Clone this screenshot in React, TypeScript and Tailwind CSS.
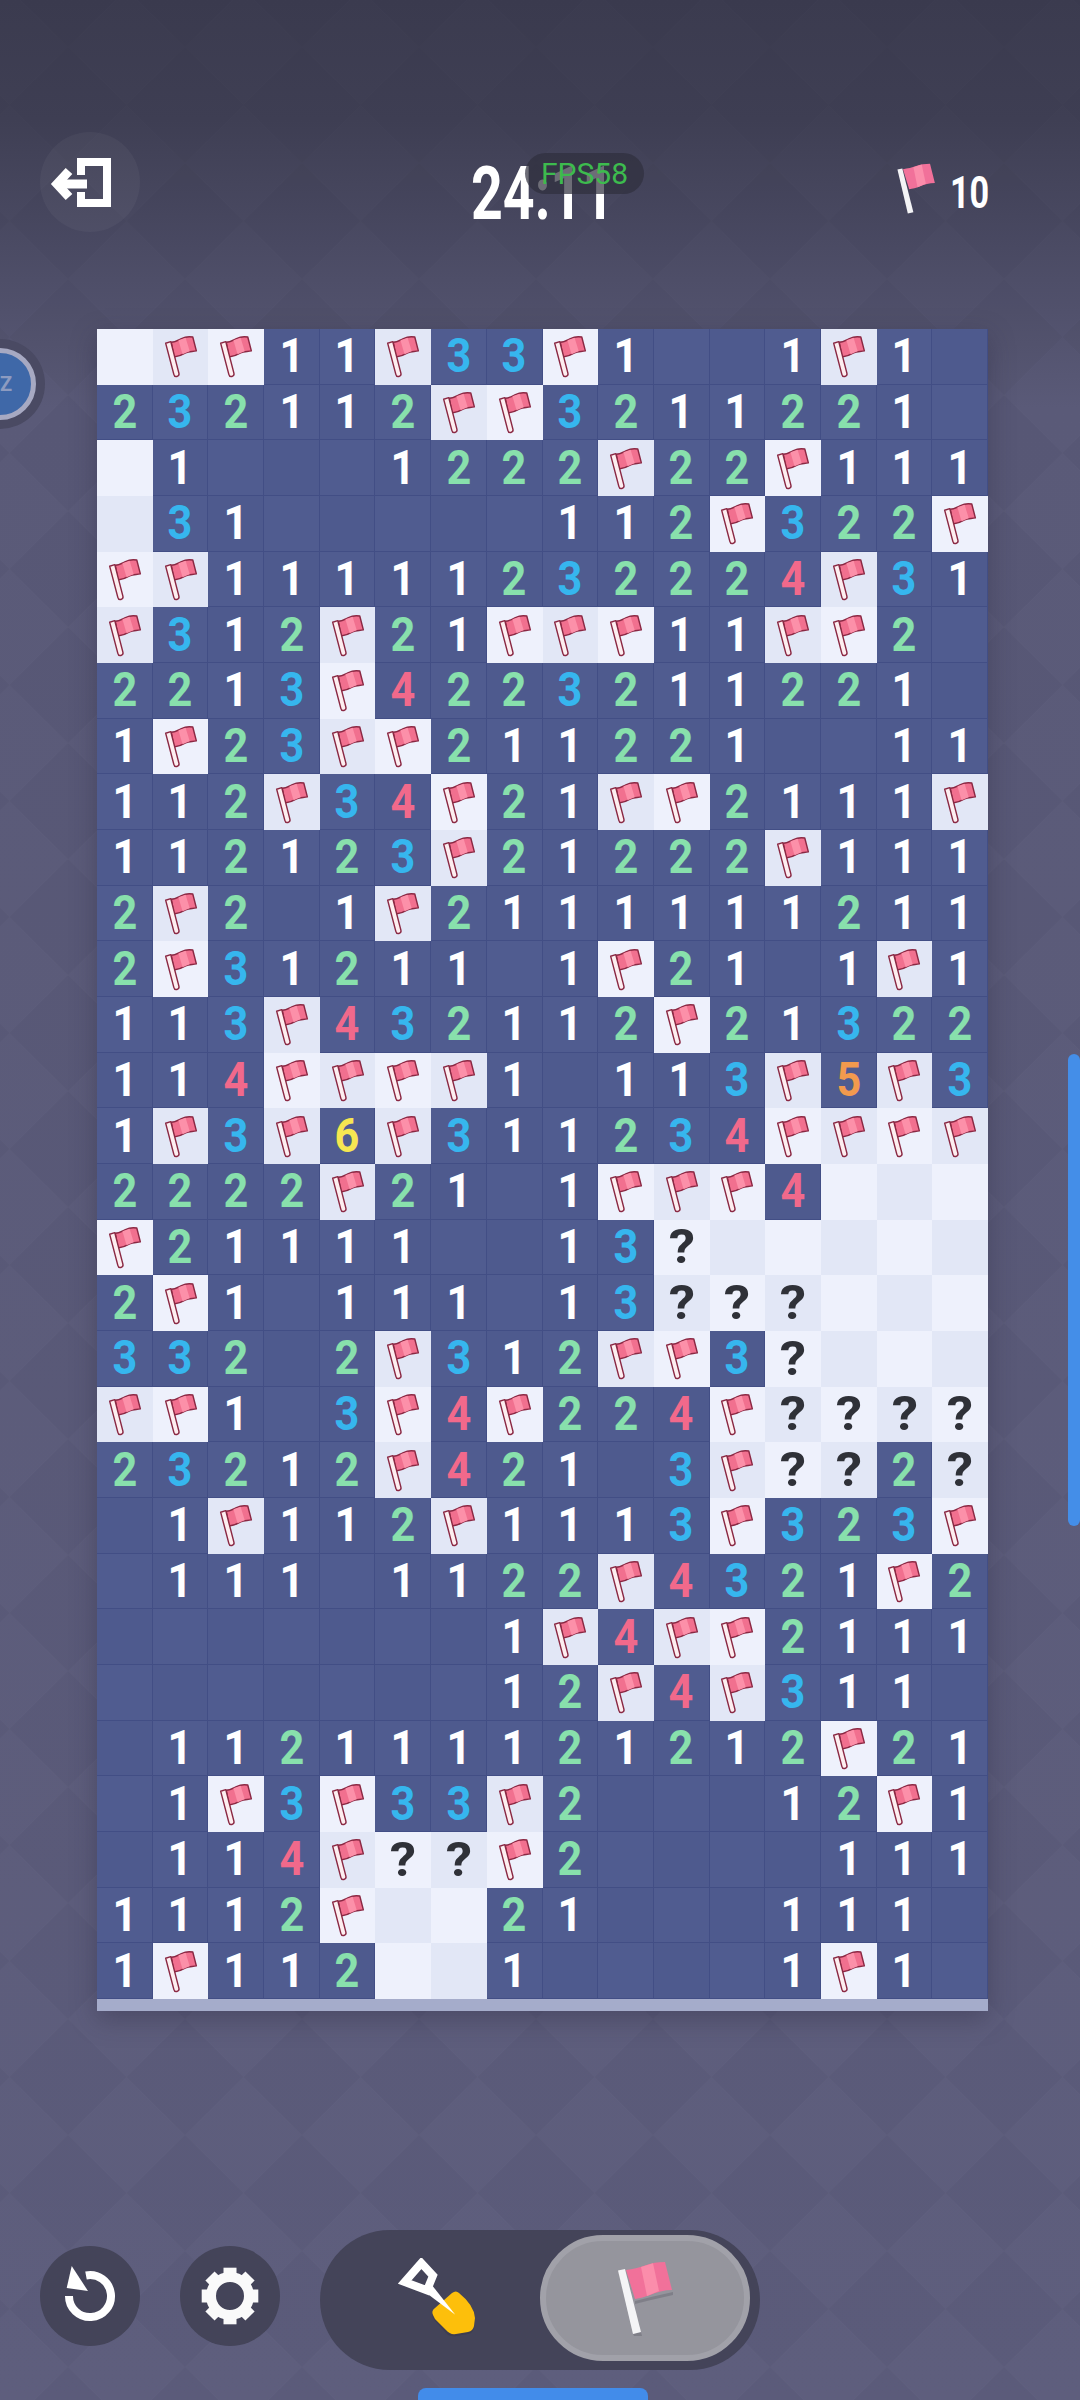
import React from 'react';

// F flag, ? question mark, L uncovered light tile, . empty dark tile
const BOARD = [
  'LFF11F33F1..1F1.',
  '232112FF3211221.',
  'L1...1222F22F111',
  'L31.....112F322F',
  'FF11111232224F31',
  'F312F21FFF11FF2.',
  '2213F4223211221.',
  '1F23FF211221..11',
  '112F34F21FF2111F',
  '11212 3F212 22F111'.replace(/ /g, ''),
  '2F2.1F2111111211',
  '2F31211.1F21.1F1',
  '113F432112F21322',
  '114FFFF1.113F5F3',
  '1F3F6F311234FFFF',
  '2222F21.1FFF4LLL',
  'F21111..13?LLLLL',
  '2F1.111.13???LLL',
  '332.2F3 12FF3?LLL'.replace(' ', ''),
  'FF1.3F4F224F????',
  '23212F421.3F??2?',
  '.1F112F1113F323F',
  '.111.1122F4321F2',
  '.......1F4FF2111',
  '.......12F4F311.',
  '.112111121212F21',
  '.1F3F33F2...12F1',
  '.114F??F2....111',
  '1112FLL21...111.',
  '1F112LL1....1F1.',
];

const DIGIT_COLORS: Record<string, string> = {
  '1': 'text-white',
  '2': 'text-[#88e0ac]',
  '3': 'text-[#36b6ee]',
  '4': 'text-[#f1698b]',
  '5': 'text-[#f29a4e]',
  '6': 'text-[#f6e651]',
};

function TileFlag() {
  return (
    <svg width="34" height="43" viewBox="0 0 33 42">
      <path d="M7 7 C11 7 14 5 17 3.500 C21 1.500 25 1.500 28 2 L31.500 15.500 C28 16.500 24.500 15.500 21 17.500 C17 20 13.500 21 9.500 21.500 Z" fill="#f1708f" stroke="#8a2843" strokeWidth="1.400" strokeLinejoin="round" />
      <path d="M14 5.200 L21 2.600 L25 15.800 L18 18.800 Z" fill="#fc90a9" />
      <path d="M1.500 8 L6.500 6.500 L14.500 37.500 Q15 40 12.500 40.500 Q10 41 9.500 38.500 Z" fill="#fdeef0" stroke="#8a2843" strokeWidth="1.400" strokeLinejoin="round" />
    </svg>
  );
}

function PlainFlag({ className, shadow }: { className: string; shadow?: boolean }) {
  return (
    <svg className={className} viewBox="0 0 55 75">
      {shadow && (
        <>
          <path d="M17 40 L33 36 L55 31 L55 34 L33 39 L17 43 Z" fill="#7f7f88" />
          <path d="M15 73 L23 71 L24 75 L16 75 Z" fill="#7f7f88" />
        </>
      )}
      <path d="M8 9 C15 8 21 7 27 4.500 C33 2 40 1 47 1 L54 29 C46 29 39 31 32 34 C27 36 22 37 17 38 Z" fill="#f1719a" />
      <path d="M23 6 L35 2.300 L41 30 L29 35 Z" fill="#fb8dab" />
      <path d="M0 9.500 L7 8 L23 71 L15 73 Z" fill="#f4f4f6" />
    </svg>
  );
}

function Shovel() {
  return (
    <svg width="80" height="80" viewBox="0 0 80 80">
      <path d="M35 60 Q33 55 37 52 L54 37 Q58 34 61 37 Q76 49 77 62 L76 70 Q75 75 70 76 L58 78 Q52 79 48 75 L37 63 Z" fill="#35354a" opacity="0.5" />
      <path d="M35 57 Q33 53 37 50 L54 35 Q58 32 61 35 Q76 47 77 60 L76 68 Q75 73 70 74 L58 76 Q52 77 48 72 L37 61 Z" fill="#fdbf0b" />
      <path d="M6.700 24 L23.300 5 L35 17.700 L29 32.300 Z" fill="none" stroke="#fff" strokeWidth="8" strokeLinejoin="miter" />
      <path d="M24.700 32.300 L33.300 26.300 L57.300 56.700 Z" fill="#fff" />
    </svg>
  );
}

function ExitIcon() {
  return (
    <svg width="100" height="100" viewBox="0 0 100 100" fill="none" stroke="#fff">
      <path d="M41 43 V30 H67 V71 H41 V60" strokeWidth="8" />
      <path d="M18 52 H47" strokeWidth="9" />
      <path d="M29 39 L17 52 L29 65" strokeWidth="9" />
    </svg>
  );
}

function RestartIcon() {
  return (
    <svg width="100" height="100" viewBox="0 0 100 100">
      <path d="M46 29.500 A21 21 0 1 1 29 50" fill="none" stroke="#fff" strokeWidth="8" />
      <path d="M31.700 20 L26.700 42 L48 45 Z" fill="#fff" />
    </svg>
  );
}

function GearIcon() {
  return (
    <svg width="100" height="100" viewBox="0 0 100 100" fill="#fafafa">
      <circle cx="50" cy="50" r="19" fill="none" stroke="#fafafa" strokeWidth="10" />
      {[0, 45, 90, 135, 180, 225, 270, 315].map((deg) => (
        <rect key={deg} x="43.500" y="21.700" width="13" height="10" transform={`rotate(${deg} 50 50)`} />
      ))}
    </svg>
  );
}

function Tile({ value, row, col }: { value: string; row: number; col: number }) {
  const even = (row + col) % 2 === 0;

  if (value === '.' || DIGIT_COLORS[value]) {
    return (
      <div className={`flex items-center justify-center border-r border-b border-[#424e85] ${even ? 'bg-[#505c90]' : 'bg-[#4e5a8e]'}`}>
        {value !== '.' && (
          <span className={`inline-block scale-x-90 text-[48px] leading-none font-bold ${DIGIT_COLORS[value]}`}>{value}</span>
        )}
      </div>
    );
  }

  return (
    <div className={`flex items-center justify-center ${even ? 'bg-[#eef1fc]' : 'bg-[#e2e7f6]'}`}>
      {value === 'F' && <TileFlag />}
      {value === '?' && <span className="inline-block scale-x-110 text-[48px] leading-none font-bold text-[#2f3138]">?</span>}
    </div>
  );
}

export default function App() {
  return (
    <div className="relative h-[2400px] w-[1080px] overflow-hidden bg-[linear-gradient(180deg,#3b3b4f_0%,#3f3f54_5%,#5a5a78_17%,#5e5e7d_100%)] font-[Roboto,sans-serif]">
      {/* diamond wallpaper */}
      <svg className="absolute inset-0" width="1080" height="2400">
        <defs>
          <pattern id="diamonds" width="117" height="116" patternUnits="userSpaceOnUse" x="68" y="47">
            <path d="M58.500 58 L117 0 L117 116 Z M58.500 58 L0 0 L0 116 Z" fill="#23233a" opacity="0.05" />
          </pattern>
        </defs>
        <rect width="1080" height="2400" fill="url(#diamonds)" />
      </svg>

      <div className="relative">
        <div className="flex items-start pt-[132px] pr-[94px] pl-10">
          <button type="button" className="flex h-[100px] w-[100px] items-center justify-center rounded-full bg-white/[0.04]">
            <ExitIcon />
          </button>
          <div className="mt-[26px] ml-[331px] w-[150px] origin-left scale-x-[0.74] text-[75px] leading-[70px] font-bold whitespace-nowrap text-white">24:11</div>
          <div className="mt-[30px] ml-auto flex items-center gap-[14px]">
            <PlainFlag className="h-[52px] w-[39px]" />
            <span className="mt-[8px] w-[36px] origin-left scale-x-[0.76] text-[45px] leading-none font-bold text-white">10</span>
          </div>
        </div>

        <div className="mt-[97px] ml-[97px] w-[891px] bg-[#a5accb] pb-3 shadow-[0_8px_24px_rgba(40,38,60,0.35)]">
          <div className="grid h-[1670px] grid-cols-[repeat(16,1fr)] grid-rows-[repeat(30,1fr)]">
            {BOARD.map((line, row) =>
              line.split('').map((value, col) => <Tile key={`${row}-${col}`} value={value} row={row} col={col} />),
            )}
          </div>
        </div>

        <div className="mt-[219px] flex items-start gap-10 pl-10">
          <button type="button" className="mt-4 flex h-[100px] w-[100px] items-center justify-center rounded-full bg-[#444459]">
            <RestartIcon />
          </button>
          <button type="button" className="mt-4 flex h-[100px] w-[100px] items-center justify-center rounded-full bg-[#444459]">
            <GearIcon />
          </button>
          <div className="flex h-[140px] w-[440px] items-start rounded-full bg-[#444459] pt-[5px] pr-[10px]">
            <div className="flex h-[126px] flex-1 items-center justify-center pl-4">
              <Shovel />
            </div>
            <div className="flex h-[126px] w-[210px] items-center justify-center rounded-full border-[6px] border-[#a1a1a9] bg-[#95959d]">
              <PlainFlag className="h-[75px] w-[55px]" shadow />
            </div>
          </div>
        </div>
      </div>

      {/* overlays */}
      <div className="absolute top-[153px] left-[525px] flex h-[41px] w-[119px] items-center justify-center rounded-full bg-[#2f2f3d]/70 text-[30px] leading-none text-[#3dbb4e]">
        FPS58
      </div>
      <div className="absolute top-[339px] left-[-45px] flex h-[90px] w-[90px] items-center justify-center rounded-full bg-[#4a4a63]">
        <div className="flex h-[72px] w-[72px] items-center justify-center rounded-full border-[5px] border-[#a7a9c2] bg-[#3f68a8] text-[20px] font-bold tracking-wider text-[#8d9bc0]">
          ZZ
        </div>
      </div>
      <div className="absolute top-[1054px] right-0 h-[472px] w-3 rounded-full bg-[#448ee8]" />
      <div className="absolute bottom-0 left-[418px] h-3 w-[230px] rounded-t-lg bg-[#428cea]" />
    </div>
  );
}
